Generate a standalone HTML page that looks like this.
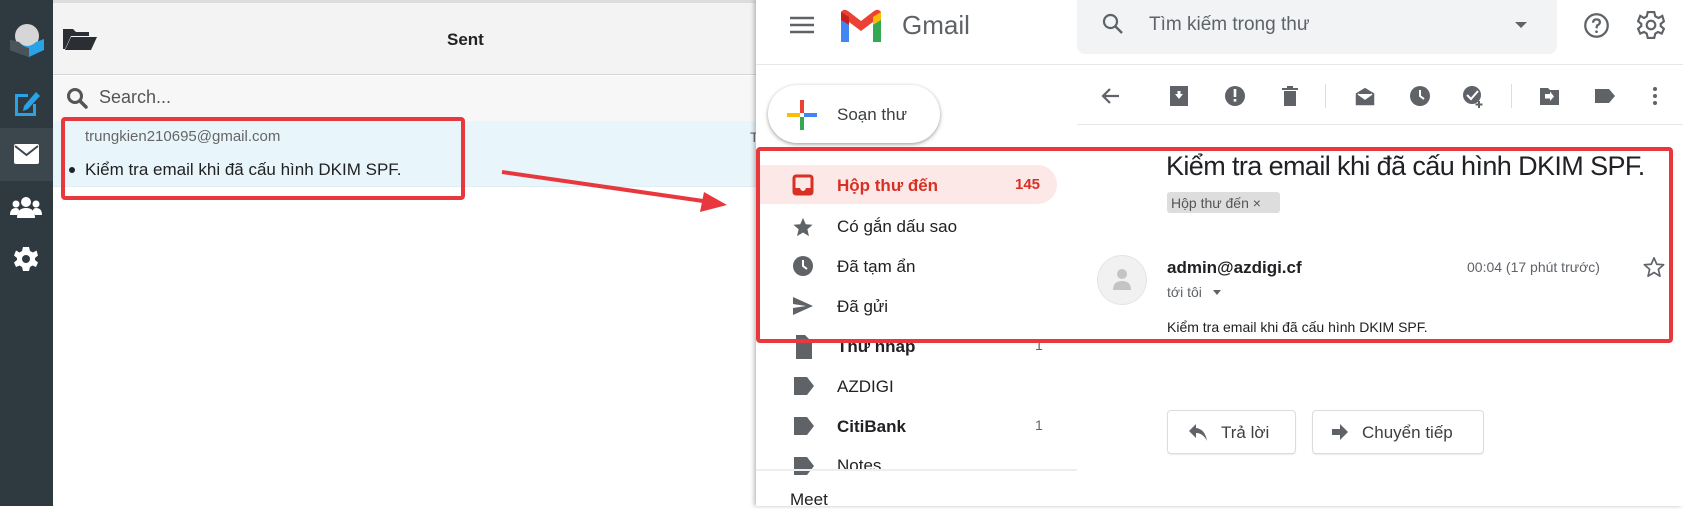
<!DOCTYPE html>
<html><head><meta charset="utf-8">
<style>
*{margin:0;padding:0;box-sizing:border-box}
body{width:1683px;height:506px;overflow:hidden;position:relative;background:#fff;font-family:"Liberation Sans","Noto Sans CJK SC",sans-serif;color:#202124}
.a{position:absolute}
.t{position:absolute;white-space:nowrap;line-height:1}
</style></head><body>
<!-- left sidebar -->
<div class="a" style="left:0;top:0;width:53px;height:506px;background:#2e3a40"></div>
<div class="a" style="left:0;top:128px;width:53px;height:53px;background:#3c474d"></div>
<svg class="a" style="left:9px;top:22px" width="36" height="36" viewBox="0 0 36 36">
<circle cx="18" cy="14" r="12" fill="#d6d6d6"/>
<path d="M1 18 L10 20 Q18 28 27 20 L35 17 L35 28 L20 35 L1 28 Z" fill="#29a3e8"/>
<path d="M1 18 L10 20 Q14 25 20 26 L20 35 L1 28 Z" fill="#4a555b"/>
</svg>
<svg class="a" style="left:12px;top:89px" width="30" height="28" viewBox="0 0 30 28">
<path d="M3 5 H16 V8 H6 V24 H21 V15 H24 V27 H3 Z" fill="#29a3e8"/>
<path d="M12 17 L24 3 L28 7 L16 20 L11 22 Z" fill="#29a3e8"/>
</svg>
<svg class="a" style="left:13px;top:143px" width="27" height="22" viewBox="0 0 27 22">
<rect x="1" y="1" width="25" height="20" rx="2" fill="#fff"/>
<path d="M2 3 L13.5 12 L25 3" stroke="#3c474d" stroke-width="2" fill="none"/>
</svg>
<svg class="a" style="left:10px;top:196px" width="32" height="24" viewBox="0 0 32 24">
<circle cx="16" cy="6" r="5" fill="#fff"/><path d="M7 22 Q7 12 16 12 Q25 12 25 22 Z" fill="#fff"/>
<circle cx="6" cy="8" r="3.5" fill="#fff"/><path d="M0 19 Q0 12 6 12 Q9 12 9 15 L7 19 Z" fill="#fff"/>
<circle cx="26" cy="8" r="3.5" fill="#fff"/><path d="M32 19 Q32 12 26 12 Q23 12 23 15 L25 19 Z" fill="#fff"/>
</svg>
<svg class="a" style="left:13px;top:246px" width="26" height="26" viewBox="0 0 26 26">
<path d="M10 1 H16 L17 5 L20 6.5 L23.5 4.5 L25 9.5 L22 12 V14 L25 16.5 L23 21 L19.5 19.5 L17 21 L16 25 H10 L9 21 L6.5 19.5 L3 21 L1 16.5 L4 14 V12 L1 9.5 L3 4.5 L6.5 6.5 L9 5 Z" fill="#fff"/>
<circle cx="13" cy="13" r="4" fill="#2e3a40"/>
</svg>
<!-- left header -->
<div class="a" style="left:53px;top:0;width:703px;height:3px;background:#dcdcdc"></div>
<div class="a" style="left:53px;top:3px;width:703px;height:72px;background:#f3f3f3;border-bottom:1px solid #d5d5d5"></div>
<svg class="a" style="left:62px;top:27px" width="36" height="24" viewBox="0 0 36 24">
<path d="M1 2 H11 L14 5 H27 V9 H9 L3 22 H1 Z" fill="#2b2f33"/>
<path d="M9 10 H35 L29 23 H3 Z" fill="#2b2f33"/>
</svg>
<div class="t" style="left:447px;top:31px;font-size:17px;font-weight:bold;color:#222">Sent</div>
<!-- search -->
<div class="a" style="left:53px;top:76px;width:703px;height:45px;background:#f7f7f7"></div>
<svg class="a" style="left:66px;top:87px" width="22" height="22" viewBox="0 0 22 22">
<circle cx="9" cy="9" r="6.5" stroke="#555" stroke-width="3" fill="none"/>
<path d="M14 14 L20 20" stroke="#555" stroke-width="3.5" stroke-linecap="round"/>
</svg>
<div class="t" style="left:99px;top:88px;font-size:18px;color:#555">Search...</div>
<!-- selected row -->
<div class="a" style="left:53px;top:121px;width:703px;height:66px;background:#e8f6fb;border-bottom:1px solid #dfeff5"></div>
<div class="t" style="left:85px;top:129px;font-size:15px;color:#666">trungkien210695@gmail.com</div>
<div class="a" style="left:69px;top:167px;width:6px;height:6px;border-radius:50%;background:#222"></div>
<div class="t" style="left:85px;top:161px;font-size:17px;color:#222">Kiểm tra email khi đã cấu hình DKIM SPF.</div>
<div class="t" style="left:750px;top:130px;font-size:14px;color:#666">T</div>
<div class="a" style="left:61px;top:117px;width:404px;height:83px;border:4px solid #e8383d;border-radius:4px"></div>
<!-- gmail panel -->
<div class="a" style="left:756px;top:0;width:927px;height:506px;background:#fff;box-shadow:-2px 0 4px rgba(0,0,0,.25)"></div>
<div class="a" style="left:756px;top:64px;width:927px;height:1px;background:#e8e8e8"></div>
<svg class="a" style="left:790px;top:16px" width="24" height="18" viewBox="0 0 24 18">
<path d="M0 2H24M0 9H24M0 16H24" stroke="#5f6368" stroke-width="2.4"/>
</svg>
<svg class="a" style="left:838px;top:8px" width="46" height="34" viewBox="0 0 46 34">
<path d="M3 8 V34 H11 V15 Z" fill="#4285f4"/>
<path d="M35 15 V34 H43 V8 Z" fill="#34a853"/>
<path d="M3 8 L23 23 L43 8 L43 4 Q40 0 36 3 L23 13 L10 3 Q6 0 3 4 Z" fill="#ea4335"/>
<path d="M35 9 L43 4 V12 L35 17 Z" fill="#fbbc04"/>
<path d="M3 4 V12 L11 17 V9 Z" fill="#c5221f"/>
</svg>
<div class="t" style="left:902px;top:12px;font-size:26px;color:#5f6368">Gmail</div>
<div class="a" style="left:1077px;top:0;width:480px;height:54px;background:#f1f3f4;border-radius:0 0 8px 8px"></div>
<svg class="a" style="left:1101px;top:12px" width="24" height="24" viewBox="0 0 24 24">
<circle cx="9.5" cy="9.5" r="6.5" stroke="#5f6368" stroke-width="2.2" fill="none"/>
<path d="M14.5 14.5 L21 21" stroke="#5f6368" stroke-width="2.4"/>
</svg>
<div class="t" style="left:1149px;top:15px;font-size:19px;color:#5f6368">Tìm kiếm trong thư</div>
<div class="a" style="left:1515px;top:22px;width:0;height:0;border-left:6px solid transparent;border-right:6px solid transparent;border-top:6px solid #5f6368"></div>
<svg class="a" style="left:1583px;top:12px" width="27" height="27" viewBox="0 0 24 24">
<circle cx="12" cy="12" r="10" stroke="#5f6368" stroke-width="2" fill="none"/>
<path d="M9 9.5 Q9 6.5 12 6.5 Q15 6.5 15 9 Q15 11 12.5 12 L12 14.5" stroke="#5f6368" stroke-width="2" fill="none"/>
<circle cx="12" cy="17.5" r="1.2" fill="#5f6368"/>
</svg>
<svg class="a" style="left:1637px;top:11px" width="28" height="28" viewBox="0 0 26 26">
<path d="M10 1 H16 L17 5 L20 6.5 L23.5 4.5 L25 9.5 L22 12 V14 L25 16.5 L23 21 L19.5 19.5 L17 21 L16 25 H10 L9 21 L6.5 19.5 L3 21 L1 16.5 L4 14 V12 L1 9.5 L3 4.5 L6.5 6.5 L9 5 Z" stroke="#5f6368" stroke-width="2" fill="none"/>
<circle cx="13" cy="13" r="4" stroke="#5f6368" stroke-width="2" fill="none"/>
</svg>
<!-- compose -->
<div class="a" style="left:768px;top:85px;width:172px;height:58px;border-radius:29px;background:#fff;box-shadow:0 1px 3px rgba(0,0,0,.3),0 2px 6px rgba(0,0,0,.12)"></div>
<svg class="a" style="left:787px;top:100px" width="30" height="30" viewBox="0 0 30 30">
<rect x="13" y="0" width="4" height="13" fill="#ea4335"/><rect x="17" y="13" width="13" height="4" fill="#4285f4"/>
<rect x="13" y="17" width="4" height="13" fill="#34a853"/><rect x="0" y="13" width="13" height="4" fill="#fbbc04"/>
</svg>
<div class="t" style="left:837px;top:106px;font-size:17px;color:#3c4043">Soạn thư</div>
<!-- nav -->
<div class="a" style="left:756px;top:165px;width:301px;height:39px;background:#fce8e6;border-radius:0 20px 20px 0"></div>
<svg class="a" style="left:792px;top:174px" width="22" height="22" viewBox="0 0 22 22"><rect x="2" y="2" width="18" height="18" rx="2" stroke="#d93025" stroke-width="3" fill="none"/><path d="M3 14 H8 Q9 17 11 17 Q13 17 14 14 H19 V19 H3 Z" fill="#d93025"/></svg>
<div class="t" style="left:837px;top:177px;font-size:17px;font-weight:bold;color:#d93025">Hộp thư đến</div>
<div class="t" style="left:1015px;top:177px;font-size:15px;font-weight:bold;color:#d93025">145</div>
<svg class="a" style="left:792px;top:216px" width="22" height="22" viewBox="0 0 24 24"><path d="M12 2 L15 9 L22.5 9.5 L16.8 14.5 L18.5 22 L12 18 L5.5 22 L7.2 14.5 L1.5 9.5 L9 9 Z" fill="#5f6368"/></svg>
<div class="t" style="left:837px;top:218px;font-size:17px;color:#202124">Có gắn dấu sao</div>
<svg class="a" style="left:792px;top:255px" width="22" height="22" viewBox="0 0 22 22"><circle cx="11" cy="11" r="10" fill="#5f6368"/><path d="M11 5 V11 L15 14" stroke="#fff" stroke-width="2" fill="none"/></svg>
<div class="t" style="left:837px;top:258px;font-size:17px;color:#202124">Đã tạm ẩn</div>
<svg class="a" style="left:792px;top:295px" width="22" height="22" viewBox="0 0 22 22"><path d="M1 2 L21 11 L1 20 L1 13 L14 11 L1 9 Z" fill="#5f6368"/></svg>
<div class="t" style="left:837px;top:298px;font-size:17px;color:#202124">Đã gửi</div>
<svg class="a" style="left:794px;top:335px" width="18" height="24" viewBox="0 0 18 24"><path d="M2 0 H11 L18 7 V24 H2 Z" fill="#5f6368"/></svg>
<div class="t" style="left:837px;top:338px;font-size:17px;font-weight:bold;color:#202124">Thư nháp</div>
<div class="t" style="left:1035px;top:338px;font-size:14px;color:#5f6368">1</div>
<svg class="a" style="left:792px;top:377px" width="22" height="18" viewBox="0 0 22 18"><path d="M2 0 H15 L22 9 L15 18 H2 Z" fill="#5f6368"/></svg>
<div class="t" style="left:837px;top:378px;font-size:17px;color:#202124">AZDIGI</div>
<svg class="a" style="left:792px;top:417px" width="22" height="18" viewBox="0 0 22 18"><path d="M2 0 H15 L22 9 L15 18 H2 Z" fill="#5f6368"/></svg>
<div class="t" style="left:837px;top:418px;font-size:17px;font-weight:bold;color:#202124">CitiBank</div>
<div class="t" style="left:1035px;top:418px;font-size:14px;color:#5f6368">1</div>
<svg class="a" style="left:792px;top:457px" width="22" height="18" viewBox="0 0 22 18"><path d="M2 0 H15 L22 9 L15 18 H2 Z" fill="#5f6368"/></svg>
<div class="t" style="left:837px;top:457px;font-size:17px;color:#202124">Notes</div>
<div class="a" style="left:756px;top:469px;width:321px;height:2px;background:#eee"></div>
<div class="t" style="left:790px;top:491px;font-size:17px;color:#202124">Meet</div>
<!-- toolbar -->
<svg class="a" style="left:1099px;top:84px" width="580" height="24" viewBox="0 0 580 24" fill="#5f6368">
<path d="M20 12 H4 M11 5 L4 12 L11 19" stroke="#5f6368" stroke-width="2.2" fill="none"/>
<path d="M71 2 H89 V22 H71 Z M76 10 L80 15 L84 10 H81.5 V7 H78.5 V10 Z" fill-rule="evenodd"/>
<circle cx="136" cy="12" r="10"/><rect x="134.7" y="5" width="2.6" height="8" fill="#fff"/><rect x="134.7" y="15" width="2.6" height="2.6" fill="#fff"/>
<path d="M183 4 H199 V6 H183 Z M185 7 H197 V22 H185 Z M188 2 H194 V4 H188 Z"/>
<rect x="226" y="0" width="1" height="24" fill="#ddd"/>
<path d="M256 9 L266 3 L276 9 V22 H256 Z M259 10 L266 15 L273 10" stroke="#fff" stroke-width="1.5"/>
<circle cx="321" cy="12" r="10"/><path d="M321 6 V12 L325 15" stroke="#fff" stroke-width="2" fill="none"/>
<circle cx="373" cy="11" r="9"/><path d="M368 11 L372 15 L379 7" stroke="#fff" stroke-width="2" fill="none"/><path d="M380 17 V24 M376.5 20.5 H383.5" stroke="#5f6368" stroke-width="2"/>
<rect x="412" y="0" width="1" height="24" fill="#ddd"/>
<path d="M441 4 H449 L451 6 H460 V21 H441 Z M446 10 H451 V7.5 L455 12.5 L451 17 V14.5 H446 Z" fill-rule="evenodd"/>
<path d="M496 5 H510 L516 12 L510 19 H496 Z"/>
<circle cx="556" cy="5" r="2"/><circle cx="556" cy="12" r="2"/><circle cx="556" cy="19" r="2"/>
</svg>
<div class="a" style="left:1077px;top:124px;width:606px;height:1px;background:#e8e8e8"></div>
<!-- message -->
<div class="t" style="left:1166px;top:153px;font-size:27px;letter-spacing:-0.6px;color:#202124">Kiểm tra email khi đã cấu hình DKIM SPF.</div>
<div class="a" style="left:1167px;top:192px;width:113px;height:21px;background:#ddd;border-radius:3px"></div>
<div class="t" style="left:1171px;top:196px;font-size:14px;color:#555">Hộp thư đến ×</div>
<div class="a" style="left:1097px;top:255px;width:50px;height:50px;border-radius:50%;background:#f1f1f1;border:1px solid #e4e4e4"></div>
<svg class="a" style="left:1112px;top:268px" width="20" height="22" viewBox="0 0 20 22"><circle cx="10" cy="6" r="5" fill="#c4c4c4"/><path d="M1 22 Q1 13 10 13 Q19 13 19 22 Z" fill="#c4c4c4"/></svg>
<div class="t" style="left:1167px;top:259px;font-size:17px;font-weight:bold;color:#202124">admin@azdigi.cf</div>
<div class="t" style="left:1467px;top:260px;font-size:14px;color:#5f6368">00:04 (17 phút trước)</div>
<svg class="a" style="left:1643px;top:256px" width="22" height="22" viewBox="0 0 24 24"><path d="M12 2 L15 9 L22.5 9.5 L16.8 14.5 L18.5 22 L12 18 L5.5 22 L7.2 14.5 L1.5 9.5 L9 9 Z" stroke="#5f6368" stroke-width="1.8" fill="none" stroke-linejoin="round"/></svg>
<div class="t" style="left:1167px;top:285px;font-size:14px;color:#5f6368">tới tôi</div>
<div class="a" style="left:1213px;top:290px;width:0;height:0;border-left:4px solid transparent;border-right:4px solid transparent;border-top:5px solid #5f6368"></div>
<div class="t" style="left:1167px;top:320px;font-size:14px;color:#202124">Kiểm tra email khi đã cấu hình DKIM SPF.</div>
<div class="a" style="left:1167px;top:410px;width:129px;height:44px;border:1px solid #dadce0;border-radius:4px;box-shadow:0 1px 1px rgba(0,0,0,.08)"></div>
<svg class="a" style="left:1188px;top:422px" width="20" height="20" viewBox="0 0 20 20"><path d="M8 2 L1 9 L8 16 V11 Q15 11 19 19 Q17 7 8 6 Z" fill="#5f6368"/></svg>
<div class="t" style="left:1221px;top:424px;font-size:17px;color:#3c4043">Trả lời</div>
<div class="a" style="left:1312px;top:410px;width:172px;height:44px;border:1px solid #dadce0;border-radius:4px;box-shadow:0 1px 1px rgba(0,0,0,.08)"></div>
<svg class="a" style="left:1330px;top:422px" width="20" height="20" viewBox="0 0 20 20"><path d="M10 2 L18 10 L10 18 V13 H2 V7 H10 Z" fill="#5f6368"/></svg>
<div class="t" style="left:1362px;top:424px;font-size:17px;color:#3c4043">Chuyển tiếp</div>
<!-- red overlays -->
<div class="a" style="left:756px;top:147px;width:917px;height:196px;border:4px solid #e8383d;border-radius:4px"></div>
<svg class="a" style="left:0;top:0" width="1683" height="506" viewBox="0 0 1683 506">
<path d="M502 172 L710 202" stroke="#e8383d" stroke-width="4"/>
<path d="M727 205 L704 192 L700 212 Z" fill="#e8383d"/>
</svg>
</body></html>
